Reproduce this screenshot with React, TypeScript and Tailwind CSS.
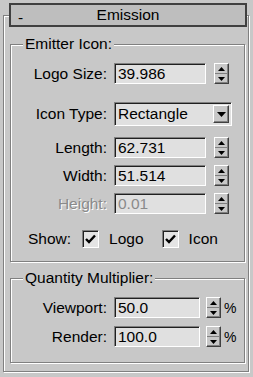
import React from 'react';

const etched = 'border border-[#808080] shadow-[inset_1px_1px_0_#ffffff,1px_1px_0_#ffffff]';
const sunken = 'border border-[#808080] border-b-white border-r-white shadow-[inset_1px_1px_0_#202020]';
const raised = 'border border-white border-b-[#404040] border-r-[#404040] shadow-[inset_-1px_-1px_0_#808080]';

function Spinner() {
    return (
        <div className={`w-[15px] h-[21px] flex flex-col bg-[#c8c8c8] ${raised}`}>
            <div className="flex-1 flex items-center justify-center border-b border-[#808080]">
                <svg width="7" height="4" viewBox="0 0 7 4">
                    <path d="M3.5 0L7 4H0z" fill="#000" />
                </svg>
            </div>
            <div className="flex-1 flex items-center justify-center">
                <svg width="7" height="4" viewBox="0 0 7 4">
                    <path d="M0 0h7L3.5 4z" fill="#000" />
                </svg>
            </div>
        </div>
    );
}

interface SpinRowProps {
    label: string;
    value: string;
    disabled?: boolean;
    width?: string;
    percent?: boolean;
    className?: string;
}

function SpinRow({ label, value, disabled = false, percent = false, className = '' }: SpinRowProps) {
    const textColor = disabled ? 'text-[#8a8a8a] [text-shadow:1px_1px_0_#ffffff]' : 'text-black';
    return (
        <div className={`flex items-center h-[21px] ${className}`}>
            <div className={`w-[96px] text-right ${textColor}`}>{label}</div>
            <div
                className={`ml-[7px] ${percent ? 'w-[86px]' : 'w-[92px]'} h-[21px] bg-[#e0e0e0] flex items-center pl-[3px] ${sunken} ${disabled ? 'text-[#8a8a8a]' : ''}`}
            >
                {value}
            </div>
            <div className={percent ? 'ml-[6px]' : 'ml-[8px]'}>
                <Spinner />
            </div>
            {percent && <div className="ml-[3px] text-[14px]">%</div>}
        </div>
    );
}

function CheckBox({ label }: { label: string }) {
    return (
        <div className="flex items-center">
            <div className={`w-[17px] h-[18px] bg-[#e4e4e4] flex items-center justify-center ${sunken}`}>
                <svg width="11" height="10" viewBox="0 0 11 10">
                    <path d="M1 5l3 3L10 1.5" fill="none" stroke="#000" strokeWidth="2.4" />
                </svg>
            </div>
            <span className="ml-[10px]">{label}</span>
        </div>
    );
}

export default function App() {
    return (
        <div
            className="w-[253px] h-[377px] bg-[#c8c8c8] pt-[15px] pl-[3px] text-[15.5px] text-black leading-none"
            style={{ fontFamily: '"Liberation Sans", Arial, sans-serif' }}
        >
            {/* 外框 */}
            <div className={`relative w-[246px] h-[357px] pl-[6px] pt-[28px] ${etched}`}>
                {/* 标题栏 */}
                <div className="absolute left-[5px] top-[-13px] w-[238px] h-[24px] border-2 border-[#404040] bg-[#bebebe] flex items-center">
                    <span className="absolute left-[7px] top-[5px]">-</span>
                    <span className="w-full text-center">Emission</span>
                </div>

                {/* Emitter Icon */}
                <div className={`relative w-[235px] h-[218px] ${etched}`}>
                    <div className="absolute left-[12px] top-[-9px] px-[2px] bg-[#c8c8c8]">Emitter Icon:</div>
                    <SpinRow label="Logo Size:" value="39.986" className="mt-[18px]" />
                    <div className="flex items-center h-[24px] mt-[18px]">
                        <div className="w-[96px] text-right">Icon Type:</div>
                        <div
                            className={`ml-[7px] w-[118px] h-[24px] bg-[#e0e0e0] flex items-center pl-[3px] pr-[2px] ${sunken}`}
                        >
                            <span className="flex-1">Rectangle</span>
                            <div className={`w-[16px] h-[18px] bg-[#c8c8c8] flex items-center justify-center ${raised}`}>
                                <svg width="9" height="5" viewBox="0 0 9 5">
                                    <path d="M0 0h9L4.5 5z" fill="#000" />
                                </svg>
                            </div>
                        </div>
                    </div>
                    <SpinRow label="Length:" value="62.731" className="mt-[11px]" />
                    <SpinRow label="Width:" value="51.514" className="mt-[7px]" />
                    <SpinRow label="Height:" value="0.01" disabled className="mt-[7px]" />
                    <div className="flex items-center h-[21px] mt-[14px]">
                        <span className="ml-[17px] mr-[11px]">Show:</span>
                        <CheckBox label="Logo" />
                        <div className="ml-[18px]">
                            <CheckBox label="Icon" />
                        </div>
                    </div>
                </div>

                {/* Quantity Multiplier */}
                <div className={`relative w-[235px] h-[85px] mt-[16px] ${etched}`}>
                    <div className="absolute left-[12px] top-[-9px] px-[2px] bg-[#c8c8c8]">Quantity Multiplier:</div>
                    <SpinRow label="Viewport:" value="50.0" percent className="mt-[18px]" />
                    <SpinRow label="Render:" value="100.0" percent className="mt-[8px]" />
                </div>
            </div>
        </div>
    );
}
